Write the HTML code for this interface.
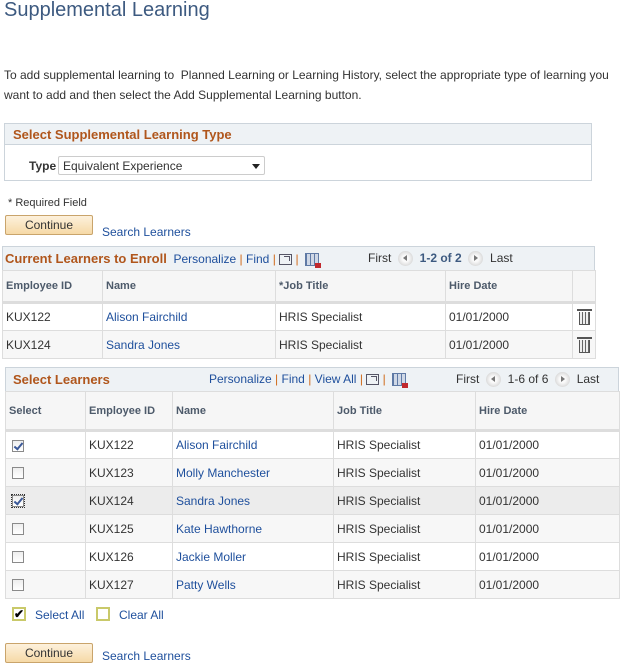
<!DOCTYPE html>
<html><head><meta charset="utf-8"><style>
*{margin:0;padding:0;box-sizing:border-box}
body{width:627px;height:666px;background:#fff;font-family:"Liberation Sans",Arial,sans-serif;font-size:12px;color:#333;position:relative;overflow:hidden}
.a{position:absolute;white-space:nowrap}
.lnk{color:#1e4f9c}
.sep{color:#d06a1a}
.btn{position:absolute;width:88px;height:20px;border:1px solid #c9a46b;border-radius:2px;background:linear-gradient(#fdf1dc,#f6d9a6);text-align:center;line-height:18px;font-size:12px;color:#333}
table{position:absolute;border-collapse:collapse;table-layout:fixed}
td{border:1px solid #ddd;padding:0 3px;height:28px;vertical-align:middle;white-space:nowrap;overflow:hidden}
th{border:1px solid #ddd;border-bottom:3px solid #ddd;background:#f6f6f6;text-align:left;font-weight:bold;color:#4d5a6a;font-size:11px;padding:0 3px;white-space:nowrap}
.tb{position:absolute;background:#eef2f5;border:1px solid #ccd4db;border-bottom:none}
.hd{color:#b0561c;font-weight:bold;font-size:13px}
tr.g td{background:#f7f7f7}
tr.h td{background:#ececec}
.cb{display:inline-block;width:12px;height:12px;border:1px solid #8a8a8a;background:linear-gradient(#eee,#fff);position:relative;vertical-align:middle;margin-left:3px}
.cb.c::after{content:"";position:absolute;left:3px;top:0px;width:3px;height:7px;border:solid #3b5998;border-width:0 2px 2px 0;transform:rotate(40deg)}
.arr{display:inline-block;width:15px;height:15px;border-radius:50%;background:radial-gradient(#fafafa 30%,#c4c4c4);vertical-align:middle;position:relative}
.arr::after{content:"";position:absolute;top:4px;border-top:3.5px solid transparent;border-bottom:3.5px solid transparent}
.arr.l::after{left:5px;border-right:4px solid #777}
.arr.r::after{left:6px;border-left:4px solid #777}
.grid{display:inline-block;width:14px;height:13px;vertical-align:middle;background:repeating-linear-gradient(90deg,#5f7aa5 0 1px,#cfd8e6 1px 4px),#cfd8e6;border:1px solid #5f7aa5;position:relative}
.grid::after{content:"";position:absolute;right:-3px;bottom:-3px;width:6px;height:5px;background:#c0282d}
.pop{display:inline-block;width:13px;height:11px;border:1px solid #556;vertical-align:middle;position:relative}
.pop::after{content:"";position:absolute;right:1px;top:1px;width:5px;height:4px;border-top:1px solid #556;border-right:1px solid #556}
.trash{text-align:center}
.trash span{display:inline-block;width:11px;height:13px;border:1px solid #555;border-top:none;background:repeating-linear-gradient(90deg,#eee 0 2px,#666 2px 3px);position:relative;vertical-align:middle;margin-top:3px}
.trash span::before{content:"";position:absolute;left:-3px;top:-3px;width:15px;height:2px;background:#555}
</style></head><body>
<div class="a" style="left:4px;top:-1px;font-size:20px;color:#3d5a80">Supplemental Learning</div>
<div class="a" style="left:4px;top:65px;font-size:12px;line-height:20px">To add supplemental learning to &nbsp;Planned Learning or Learning History, select the appropriate type of learning you<br>want to add and then select the Add Supplemental Learning button.</div>

<div style="position:absolute;left:4px;top:123px;width:588px;height:58px;border:1px solid #ccd4db"></div>
<div style="position:absolute;left:5px;top:124px;width:586px;height:21px;background:#eef2f5;border-bottom:1px solid #ccd4db"></div>
<div class="a hd" style="left:13px;top:127px">Select Supplemental Learning Type</div>
<div class="a" style="left:29px;top:159px;font-weight:bold;color:#333">Type</div>
<div style="position:absolute;left:58px;top:156px;width:207px;height:19px;border:1px solid #ccc;border-radius:2px;background:#fff"></div>
<div class="a" style="left:63px;top:159px">Equivalent Experience</div>
<div class="a" style="left:252px;top:164px;width:0;height:0;border-left:4px solid transparent;border-right:4px solid transparent;border-top:5px solid #222"></div>

<div class="a" style="left:8px;top:197px;font-size:11px">* Required Field</div>
<div class="btn" style="left:5px;top:215px">Continue</div>
<div class="a lnk" style="left:102px;top:225px">Search Learners</div>

<!-- grid 1 -->
<div class="tb" style="left:2px;top:246px;width:593px;height:24px"></div>
<div class="a" style="left:5px;top:251px"><span class="hd">Current Learners to Enroll</span>&nbsp; <span class="lnk">Personalize</span> <span class="sep">|</span> <span class="lnk">Find</span> <span class="sep">|</span> <span class="pop"></span> <span class="sep">|</span> &nbsp;<span class="grid"></span></div>
<div class="a" style="left:368px;top:251px"><span style="color:#333">First</span> &nbsp;<span class="arr l"></span> &nbsp;<b style="color:#3d5a80">1-2 of 2</b> &nbsp;<span class="arr r"></span> &nbsp;Last</div>
<table style="left:2px;top:270px;width:593px">
<colgroup><col style="width:100px"><col style="width:173px"><col style="width:170px"><col style="width:127px"><col style="width:23px"></colgroup>
<tr style="height:32px"><th>Employee ID</th><th>Name</th><th>*Job Title</th><th>Hire Date</th><th></th></tr>
<tr><td>KUX122</td><td class="lnk">Alison Fairchild</td><td>HRIS Specialist</td><td>01/01/2000</td><td class="trash"><span></span></td></tr>
<tr class="g"><td>KUX124</td><td class="lnk">Sandra Jones</td><td>HRIS Specialist</td><td>01/01/2000</td><td class="trash"><span></span></td></tr>
</table>

<!-- grid 2 -->
<div class="tb" style="left:5px;top:367px;width:614px;height:24px"></div>
<div class="a hd" style="left:13px;top:372px">Select Learners</div>
<div class="a" style="left:209px;top:372px"><span class="lnk">Personalize</span> <span class="sep">|</span> <span class="lnk">Find</span> <span class="sep">|</span> <span class="lnk">View All</span> <span class="sep">|</span> <span class="pop"></span> <span class="sep">|</span> &nbsp;<span class="grid"></span></div>
<div class="a" style="left:456px;top:372px">First &nbsp;<span class="arr l"></span> &nbsp;1-6 of 6 &nbsp;<span class="arr r"></span> &nbsp;Last</div>
<table style="left:5px;top:391px;width:614px">
<colgroup><col style="width:80px"><col style="width:87px"><col style="width:161px"><col style="width:142px"><col style="width:144px"></colgroup>
<tr style="height:39px"><th>Select</th><th>Employee ID</th><th>Name</th><th>Job Title</th><th>Hire Date</th></tr>
<tr><td><span class="cb c"></span></td><td>KUX122</td><td class="lnk">Alison Fairchild</td><td>HRIS Specialist</td><td>01/01/2000</td></tr>
<tr class="g"><td><span class="cb"></span></td><td>KUX123</td><td class="lnk">Molly Manchester</td><td>HRIS Specialist</td><td>01/01/2000</td></tr>
<tr class="h"><td><span class="cb c" style="outline:1px dotted #333"></span></td><td>KUX124</td><td class="lnk">Sandra Jones</td><td>HRIS Specialist</td><td>01/01/2000</td></tr>
<tr class="g"><td><span class="cb"></span></td><td>KUX125</td><td class="lnk">Kate Hawthorne</td><td>HRIS Specialist</td><td>01/01/2000</td></tr>
<tr><td><span class="cb"></span></td><td>KUX126</td><td class="lnk">Jackie Moller</td><td>HRIS Specialist</td><td>01/01/2000</td></tr>
<tr class="g"><td><span class="cb"></span></td><td>KUX127</td><td class="lnk">Patty Wells</td><td>HRIS Specialist</td><td>01/01/2000</td></tr>
</table>

<div class="a" style="left:12px;top:607px;width:14px;height:14px;border:2px solid #c9c96a;background:#fff;font-size:12px;line-height:10px;font-weight:bold;text-align:center;color:#000">✔</div>
<div class="a lnk" style="left:35px;top:608px">Select All</div>
<div class="a" style="left:96px;top:607px;width:14px;height:14px;border:2px solid #c9c96a;background:#fff"></div>
<div class="a lnk" style="left:119px;top:608px">Clear All</div>

<div class="btn" style="left:5px;top:643px">Continue</div>
<div class="a lnk" style="left:102px;top:649px">Search Learners</div>
</body></html>
